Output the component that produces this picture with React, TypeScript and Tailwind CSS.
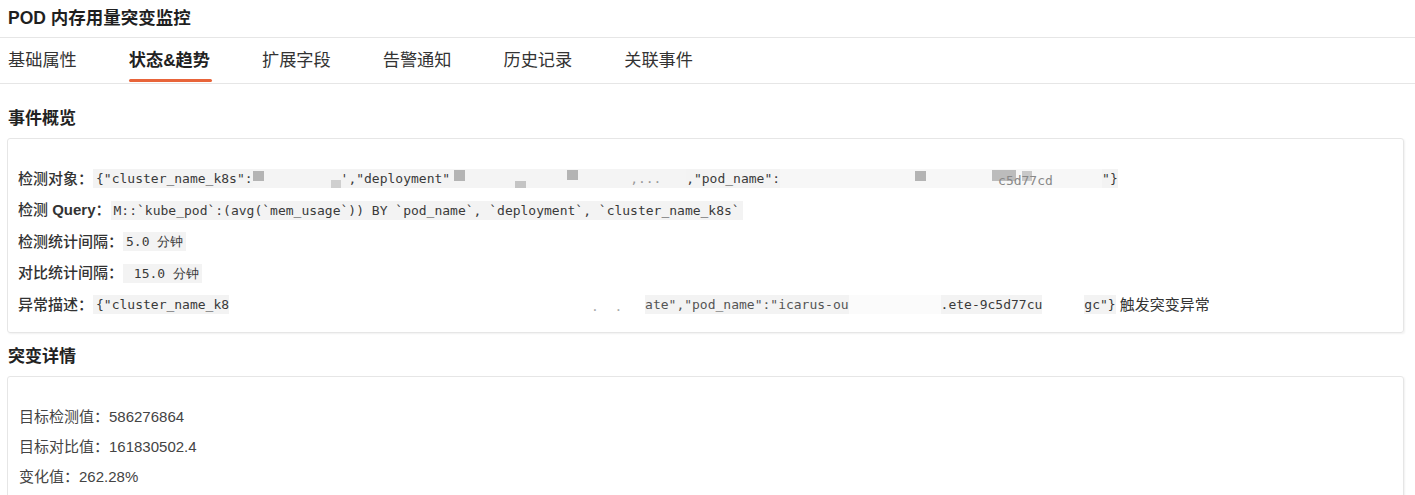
import React from "react";

const mono = "font-['DejaVu_Sans_Mono',monospace] text-[13px] text-[#3a3a3a] leading-[19px] whitespace-pre";

function Sq({ x, y, w = 11, h = 11, c = "#b4b4b4" }: { x: number; y: number; w?: number; h?: number; c?: string }) {
  return <span className="absolute block" style={{ left: x, top: y, width: w, height: h, background: c }} />;
}

function Redact({ w, bg = "#f4f4f4", children }: { w: number; bg?: string; children?: React.ReactNode }) {
  return (
    <span className="relative inline-block h-[19px]" style={{ width: w, background: bg }}>
      {children}
    </span>
  );
}

function Code({ children, className = "" }: { children: React.ReactNode; className?: string }) {
  return <span className={`${mono} bg-[#f3f3f3] ${className}`}>{children}</span>;
}

function Label({ children }: { children: React.ReactNode }) {
  return <span className="text-[15px] text-[#333] font-medium whitespace-pre">{children}</span>;
}

export default function App() {
  const tabs = ["基础属性", "状态&趋势", "扩展字段", "告警通知", "历史记录", "关联事件"];
  return (
    <div className="w-[1415px] h-[495px] overflow-hidden bg-white font-['Liberation_Sans','Noto_Sans_CJK_SC',sans-serif] text-[#333]">
      <div className="h-[38px] border-b border-[#e6e6e6] px-[8px] flex items-center">
        <span className="text-[17.5px] font-bold text-[#1f1f1f]">POD 内存用量突变监控</span>
      </div>
      <div className="h-[46px] border-b border-[#e6e6e6] px-[8px] flex gap-[52px]">
        {tabs.map((t, i) => (
          <div key={t} className="relative h-full flex items-center">
            <span className={`text-[17.2px] ${i === 1 ? "font-bold text-[#222]" : "text-[#333]"}`}>{t}</span>
            {i === 1 && <span className="absolute left-0 right-[-2px] bottom-[1px] h-[3px] bg-[#e8643a] rounded-sm" />}
          </div>
        ))}
      </div>

      <div className="pl-[7px] pr-[11px]">
        <div className="mt-[23px] h-[24px] flex items-center pl-[1px]">
          <span className="text-[17px] font-bold text-[#222]">事件概览</span>
        </div>
        <div className="mt-[7px] border border-[#e6e6e6] rounded-[3px] shadow-[1px_1px_2px_rgba(0,0,0,0.06)] pt-[24px] pb-[11px] px-[10px]">
          <div className="h-[31.5px] flex items-center">
            <Label>检测对象：</Label>
            <span className="flex items-center">
              <Code className="pl-[3px]">{'{"cluster_name_k8s":'}</Code>
              <Redact w={88}>
                <Sq x={0} y={2} w={11} h={10} />
                <Sq x={78} y={11} w={10} h={8} c="#cfcfcf" />
              </Redact>
              <Code>{`',"deployment"`}</Code>
              <Redact w={236}>
                <Sq x={4} y={1} />
                <Sq x={65} y={12} w={11} h={7} c="#c4c4c4" />
                <Sq x={117} y={1} w={11} h={10} />
                <span className={`${mono} absolute left-[180px] top-0 text-[#999]`}>,...</span>
              </Redact>
              <Code>{`,"pod_name":`}</Code>
              <Redact w={322} bg="#f7f7f7">
                <Sq x={135} y={2} w={11} h={10} />
                <Sq x={212} y={1} w={24} h={11} c="#bcbcbc" />
                <Sq x={242} y={2} w={10} h={10} c="#c8c8c8" />
                <span className={`${mono} absolute left-[218px] top-[2px] text-[#888]`}>c5d77cd</span>
              </Redact>
              <Code>{`"}`}</Code>
            </span>
          </div>
          <div className="h-[31.5px] flex items-center">
            <Label>检测 <span className="font-semibold">Query</span>：</Label>
            <Code className="px-[3px]">{"M::`kube_pod`:(avg(`mem_usage`)) BY `pod_name`, `deployment`, `cluster_name_k8s`"}</Code>
          </div>
          <div className="h-[31.5px] flex items-center">
            <Label>检测统计间隔：</Label>
            <Code className="px-[3px]">5.0 分钟</Code>
          </div>
          <div className="h-[31.5px] flex items-center">
            <Label>对比统计间隔：</Label>
            <Code className="px-[3px]"> 15.0 分钟</Code>
          </div>
          <div className="h-[31.5px] flex items-center">
            <Label>异常描述：</Label>
            <span className="flex items-center">
              <Code className="pl-[3px]">{'{"cluster_name_k8'}</Code>
              <Redact w={416} bg="#ffffff">
                <span className={`${mono} absolute left-[362px] top-[2px] text-[#aaa]`}>.  . </span>
              </Redact>
              <Code className="text-[#555]">{`ate","pod_name":"icarus-ou`}</Code>
              <Redact w={92} bg="#fbfbfb" />
              <Code>{`.ete-9c5d77cu`}</Code>
              <Redact w={42} bg="#ffffff" />
              <Code>{`gc"}`}</Code>
              <span className="text-[15px] text-[#333] ml-[4px]">触发突变异常</span>
            </span>
          </div>
        </div>

        <div className="mt-[12px] h-[24px] flex items-center pl-[1px]">
          <span className="text-[17px] font-bold text-[#222]">突变详情</span>
        </div>
        <div className="mt-[7px] border border-[#e6e6e6] rounded-[3px] shadow-[1px_1px_2px_rgba(0,0,0,0.06)] pt-[26px] pb-[20px] px-[11px] text-[15px] text-[#444]">
          <div className="h-[30px] flex items-center">目标检测值：586276864</div>
          <div className="h-[30px] flex items-center">目标对比值：161830502.4</div>
          <div className="h-[30px] flex items-center">变化值：262.28%</div>
        </div>
      </div>
    </div>
  );
}
